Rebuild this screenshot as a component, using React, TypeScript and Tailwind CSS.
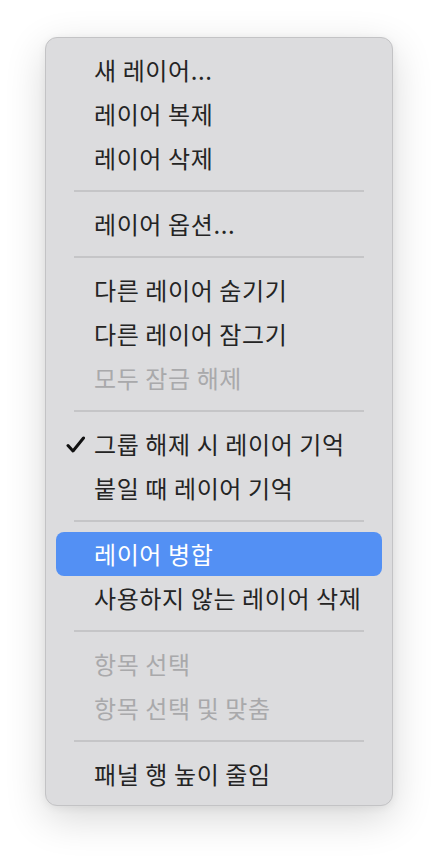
import React from "react";

type Item =
  | { kind: "item"; label: string; disabled?: boolean; checked?: boolean; active?: boolean }
  | { kind: "sep" };

const items: Item[] = [
  { kind: "item", label: "새 레이어..." },
  { kind: "item", label: "레이어 복제" },
  { kind: "item", label: "레이어 삭제" },
  { kind: "sep" },
  { kind: "item", label: "레이어 옵션..." },
  { kind: "sep" },
  { kind: "item", label: "다른 레이어 숨기기" },
  { kind: "item", label: "다른 레이어 잠그기" },
  { kind: "item", label: "모두 잠금 해제", disabled: true },
  { kind: "sep" },
  { kind: "item", label: "그룹 해제 시 레이어 기억", checked: true },
  { kind: "item", label: "붙일 때 레이어 기억" },
  { kind: "sep" },
  { kind: "item", label: "레이어 병합", active: true },
  { kind: "item", label: "사용하지 않는 레이어 삭제" },
  { kind: "sep" },
  { kind: "item", label: "항목 선택", disabled: true },
  { kind: "item", label: "항목 선택 및 맞춤", disabled: true },
  { kind: "sep" },
  { kind: "item", label: "패널 행 높이 줄임" },
];

function Check() {
  return (
    <svg width="19" height="17" viewBox="0 0 19 17" fill="none">
      <path d="M2 9.5 L7 15 L17.5 2" stroke="#111" strokeWidth="3" strokeLinecap="round" strokeLinejoin="round" />
    </svg>
  );
}

export default function App() {
  return (
    <div className="w-[438px] h-[860px] bg-white pt-[37px] pl-[45px]">
      <div
        className="w-[348px] rounded-[12px] border border-[#c3c3c5] bg-[#dcdcde] pt-[10px] pb-[9px] shadow-[0_12px_40px_rgba(0,0,0,0.16),0_2px_8px_rgba(0,0,0,0.06)]"
        style={{ fontFamily: '"Noto Sans CJK KR", "Noto Sans", sans-serif' }}
      >
        {items.map((it, i) =>
          it.kind === "sep" ? (
            <div key={i} className="h-[22px] flex items-center px-[28px]">
              <div className="h-[2px] w-full bg-[#c5c5c7]" />
            </div>
          ) : (
            <div key={i} className="px-[10px]">
              <div
                className={
                  "h-[44px] flex items-center rounded-[8px] " +
                  (it.active ? "bg-[#5390f4] text-white" : it.disabled ? "text-[#a9a9ab]" : "text-[#242424]")
                }
              >
                <div className="w-[38px] flex justify-start pl-[10px]">{it.checked ? <Check /> : null}</div>
                <span className="text-[24px] leading-none tracking-[0.6px]">{it.label}</span>
              </div>
            </div>
          )
        )}
      </div>
    </div>
  );
}
